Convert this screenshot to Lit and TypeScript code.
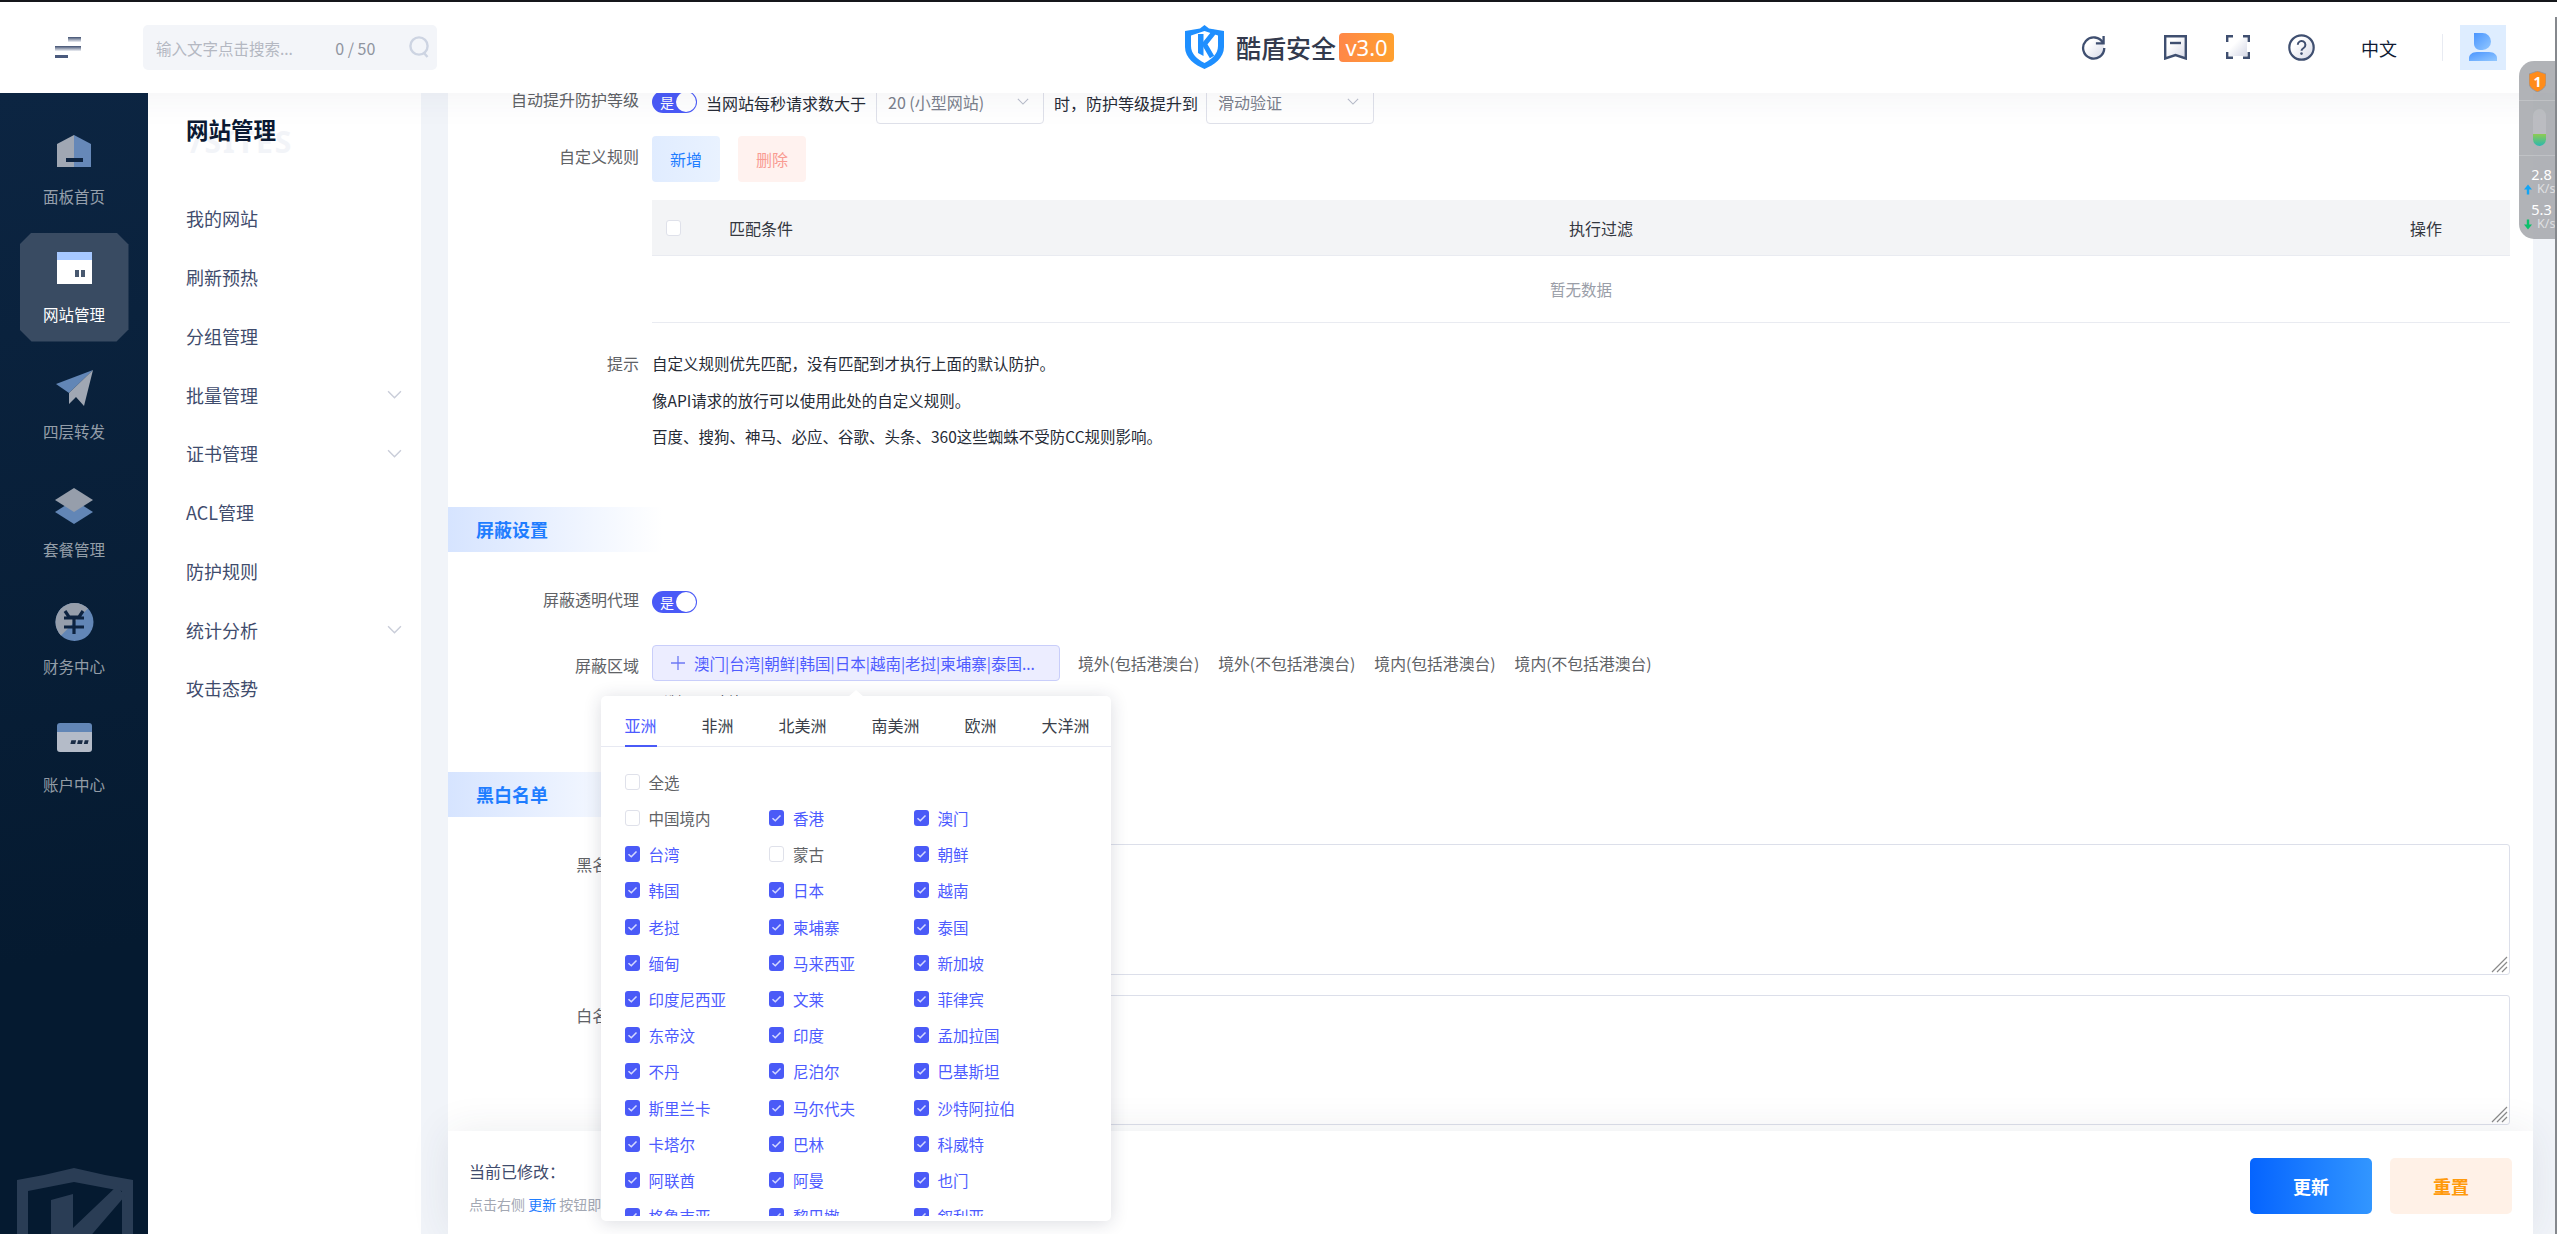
import { LitElement, html, css, svg } from "lit";
import { customElement } from "lit/decorators.js";

const SIDE = [
  { name: "面板首页", icon: svg`<path d="M18 1 1 10v23h17z" fill="#a0a7b3"/><path d="M18 1l17 9v23H18z" fill="#6688b8"/><rect x="10" y="24" width="17" height="4" fill="#0d2340"/>` },
  { name: "网站管理", active: true, icon: svg`<rect x="1" y="0" width="35" height="32" fill="#fff"/><rect x="1" y="0" width="35" height="8" fill="#a6c8ff"/><rect x="19" y="18" width="4" height="7" fill="#48586f"/><rect x="25" y="18" width="4" height="7" fill="#48586f"/>` },
  { name: "四层转发", icon: svg`<path d="M37 1 0 15l13 9z" fill="#6286b6"/><path d="M37 1 13 24v11l7-7 8 9z" fill="#a0a7b3"/>` },
  { name: "套餐管理", icon: svg`<path d="M18 13l19 12-19 12L-1 25z" fill="#6286b6"/><path d="M18 1l19 12-19 12L-1 13z" fill="#969eab"/>` },
  { name: "财务中心", icon: svg`<circle cx="18.5" cy="18" r="19" fill="#6286b6"/><path d="M32 4.600A19 19 0 0 0 5 31.400z" fill="#969eab"/><path d="M9 7l4 6h10l4-6M8 14h20M8 23h20M18 14v16" fill="none" stroke="#0d2340" stroke-width="3.200"/>` },
  { name: "账户中心", icon: svg`<path d="M1 12V4a3 3 0 0 1 3-3h29a3 3 0 0 1 3 3v8z" fill="#6286b6"/><path d="M1 10h35v17a3 3 0 0 1-3 3H4a3 3 0 0 1-3-3z" fill="#b4bbc8"/><path d="M15 23h5l1-4h-5zM22 23h5l1-4h-5zM29 23h4l1-4h-4z" fill="#1a2c46" transform="scale(.96)"/>` },
];

const MENU = [
  ["我的网站"], ["刷新预热"], ["分组管理"], ["批量管理", true], ["证书管理", true],
  ["ACL管理"], ["防护规则"], ["统计分析", true], ["攻击态势"],
] as [string, boolean?][];

const REGIONS: [string, boolean][] = [
  ["中国境内", false], ["香港", true], ["澳门", true],
  ["台湾", true], ["蒙古", false], ["朝鲜", true],
  ["韩国", true], ["日本", true], ["越南", true],
  ["老挝", true], ["柬埔寨", true], ["泰国", true],
  ["缅甸", true], ["马来西亚", true], ["新加坡", true],
  ["印度尼西亚", true], ["文莱", true], ["菲律宾", true],
  ["东帝汶", true], ["印度", true], ["孟加拉国", true],
  ["不丹", true], ["尼泊尔", true], ["巴基斯坦", true],
  ["斯里兰卡", true], ["马尔代夫", true], ["沙特阿拉伯", true],
  ["卡塔尔", true], ["巴林", true], ["科威特", true],
  ["阿联酋", true], ["阿曼", true], ["也门", true],
  ["格鲁吉亚", true], ["黎巴嫩", true], ["叙利亚", true],
];

const TABS = ["亚洲", "非洲", "北美洲", "南美洲", "欧洲", "大洋洲"];

const chevron = (cls: string) => html`<svg class=${cls} viewBox="0 0 14 8"><path d="M1 1l6 6 6-6" fill="none" stroke="currentColor" stroke-width="1.300"/></svg>`;

const toggle = () => html`<span class="switch"><span class="switch-text">是</span><span class="knob"></span></span>`;

const check = (on: boolean) => html`<span class="cb ${on ? "on" : ""}">${on ? html`<svg viewBox="0 0 15 16"><path d="M3.500 8.200l2.800 2.600 5.200-5.400" fill="none" stroke="#d5d9ff" stroke-width="1.500"/></svg>` : ""}</span>`;

@customElement("app-root")
export class AppRoot extends LitElement {
  static styles = css`
    :host { display: block; position: relative; width: 2557px; height: 1234px; overflow: hidden; background: #f1f4f9; font-family: "Noto Sans CJK SC", "Noto Sans", "Liberation Sans", sans-serif; font-size: 15.5px; color: #606266; }
    * { box-sizing: border-box; }
    svg { display: block; flex: none; }

    .page { display: flex; flex-direction: column; height: 100%; }
    .header { position: relative; z-index: 3; flex: none; height: 93px; background: #fff; border-top: 2px solid #15171b; display: flex; align-items: flex-start; box-shadow: 0 0 40px rgba(40, 50, 80, .07); }
    .left { width: 1185px; display: flex; flex: none; padding-left: 55px; }
    .burger { width: 26px; height: 21px; margin-top: 35px; }
    .search { width: 294px; height: 45px; margin: 23px 0 0 62px; border-radius: 5px; background: #f3f5f9; display: flex; align-items: center; padding: 0 7px 0 13px; color: #b4b8c2; }
    .search .ph { width: 180px; white-space: nowrap; line-height: 22px; font-size: 15.5px; }
    .search .count { width: 74px; font-size: 16px; color: #8f949f; }
    .logo { display: flex; align-items: flex-start; margin-top: 23px; }
    .logo-name { margin-left: 12px; font-size: 25px; line-height: 44px; font-weight: 500; color: #333a4d; white-space: nowrap; }
    .badge { margin: 8px 0 0 3px; width: 55px; height: 29px; border-radius: 4px; background: linear-gradient(90deg, #ff8748, #ffa02e); color: #fff; font-size: 22px; line-height: 29px; text-align: center; font-family: "Noto Sans", sans-serif; }
    .tools { margin-left: auto; padding-right: 51px; display: flex; align-items: flex-start; }
    .t-refresh { width: 25px; height: 25px; margin-top: 33px; }
    .t-book { width: 23px; height: 25px; margin: 33px 0 0 58px; }
    .t-full { width: 24px; height: 24px; margin: 33px 0 0 39px; }
    .t-help { width: 27px; height: 27px; margin: 32px 0 0 38px; }
    .lang { margin: 33px 0 0 46px; width: 36px; font-size: 18px; line-height: 26px; color: #0f1b33; white-space: nowrap; }
    .vline { width: 1px; height: 27px; background: #e8ebf2; margin: 32px 0 0 45px; }
    .avatar { width: 46px; height: 45px; margin: 23px 0 0 17px; background: #deedff; }

    .body { flex: 1; display: flex; min-height: 0; }
    .side { position: relative; z-index: 4; flex: none; width: 148px; padding-top: 22px; background: linear-gradient(170deg, #0c2542, #051a30 75%); overflow: hidden; display: flex; flex-direction: column; align-items: center; gap: 8.600px; }
    .side-item { width: 109px; height: 109px; flex: none; padding-top: 19px; display: flex; flex-direction: column; align-items: center; color: rgba(255, 255, 255, .58); }
    .side-item.active { background: #394b62; color: #fff; clip-path: polygon(11% 0, 89% 0, 100% 11%, 100% 89%, 89% 100%, 11% 100%, 0 89%, 0 11%); }
    .side-item svg { width: 36px; height: 36px; overflow: visible; }
    .side-item span { margin-top: 16px; line-height: 20px; font-size: 15.5px; white-space: nowrap; }
    .mark { position: absolute; left: 17px; top: 1075px; width: 116px; height: 130px; }

    .sub { flex: none; width: 273px; background: #fff; padding: 0 0 0 38px; position: relative; }
    .sub-title { position: relative; height: 44px; margin-top: 14px; font-size: 22.5px; line-height: 44px; font-weight: 700; color: #0c1a33; white-space: nowrap; }
    .sub-bg { position: absolute; left: 4px; top: 18px; font-size: 30px; line-height: 34px; font-weight: 700; color: #f2f4f8; letter-spacing: 2px; font-family: "Noto Sans", sans-serif; }
    .sub-title b { position: relative; font-weight: 700; }
    .sub-list { margin-top: 38px; }
    .sub-item { height: 58.75px; display: flex; align-items: center; justify-content: space-between; padding-right: 19px; font-size: 18px; color: #3f4c6d; }
    .chev { width: 15px; height: 9px; color: #c9cdd9; }

    .main { flex: 1; margin-left: 27px; margin-right: 24px; min-width: 0; display: flex; flex-direction: column; background: #fff; }
    .scroll { flex: 1; min-height: 0; overflow: hidden; }
    .content { margin-top: -14px; }
    .row { display: flex; align-items: flex-start; gap: 13px; padding-right: 23px; }
    .label { flex: none; width: 191px; text-align: right; font-size: 16px; line-height: 22px; padding-top: 9px; white-space: nowrap; color: #606266; }
    .label.flush { padding-top: 0; }
    .label.hint { padding-top: 7px; }
    .r1 { height: 45px; }
    .r1-body { display: flex; align-items: center; height: 45px; font-size: 16px; color: #262b36; white-space: nowrap; padding-top: 3px; }
    .r1-body .switch { margin: -3px 9px 0 0; }
    .select { width: 168px; height: 45px; margin-top: -3px; border: 1px solid #dfe1ea; border-radius: 4px; display: flex; align-items: center; justify-content: space-between; padding: 0 14px 0 11px; color: #7b808c; }
    .select .chev { width: 12px; height: 7px; color: #b9bdcb; }
    .s1 { margin-left: 10px; }
    .s2 { margin-left: 8px; }
    .gap-text { margin-left: 10px; }
    .r2 { margin-top: 12px; }
    .btns { display: flex; gap: 18px; }
    .btn { width: 68px; height: 46px; border-radius: 4px; display: flex; align-items: center; justify-content: center; font-size: 16px; }
    .btn.add { background: linear-gradient(90deg, #e0ecff, #e9f2ff); color: #1f7dff; }
    .btn.del { background: #fff2ef; color: #f99b92; }

    .table { margin: 18px 23px 0 204px; }
    .thead { height: 56px; background: #f3f4f6; border-bottom: 1px solid #e9ebf1; display: grid; grid-template-columns: 77px 840px 841px 1fr; align-items: center; font-size: 16px; color: #33373f; }
    .thead .cb { margin-left: 14px; }
    .empty { height: 67px; border-bottom: 1px solid #e9ebf1; display: flex; align-items: center; justify-content: center; color: #9a9ea8; font-size: 15.5px; }
    .r-hint { margin-top: 22px; }
    .lines { color: #262b36; line-height: 36.5px; white-space: nowrap; }
    .section { width: 215px; height: 45px; padding-left: 28px; background: linear-gradient(90deg, #d6e4ff, #fff); color: #1f7dff; font-size: 18px; line-height: 45px; font-weight: 700; }
    .sec1 { margin-top: 52.5px; }
    .sec2 { margin-top: 60px; }
    .r-switch { margin-top: 36px; height: 28px; }
    .r-switch .switch { margin-top: 3px; }
    .switch { position: relative; flex: none; display: inline-block; width: 45px; height: 22px; border-radius: 11px; background: #4a5af7; }
    .switch-text { position: absolute; left: 8px; top: 0; line-height: 22px; font-size: 14px; color: #fff; }
    .knob { position: absolute; right: 1px; top: 1px; width: 20px; height: 20px; border-radius: 50%; background: #fff; }
    .r-area { margin-top: 29px; height: 36px; }
    .tag { width: 408px; height: 36px; flex: none; border: 1px solid #c9cefa; border-radius: 4px; background: #ecedff; color: #4f5cff; display: flex; align-items: center; padding-left: 18px; gap: 9px; white-space: nowrap; overflow: hidden; }
    .tag svg { width: 14px; height: 14px; }
    .links { display: flex; gap: 19px; margin-left: 5px; height: 36px; align-items: center; white-space: nowrap; font-size: 15.8px; color: #606266; }
    .helper { margin: 9px 0 0 204px; line-height: 22px; height: 22px; color: #262b36; font-size: 12.5px; }
    .r-area-t { margin-top: 27px; height: 131px; }
    .r-area-b { margin-top: 20px; height: 130px; }
    .ta { flex: 1; height: 100%; border: 1px solid #dcdfea; border-radius: 3px; position: relative; background: #fff; }
    .grip { position: absolute; right: 1px; bottom: 1px; width: 17px; height: 17px; }

    .action { position: relative; z-index: 2; flex: none; height: 103px; background: #fff; display: flex; align-items: flex-start; justify-content: space-between; padding: 27px 21px 0 21px; box-shadow: 0 0 40px rgba(40, 50, 80, .09); }
    .action-t { font-size: 16px; line-height: 26px; color: #3f4c6d; white-space: nowrap; }
    .action-s { font-size: 14px; line-height: 20px; margin-top: 10px; color: #a3a8b3; white-space: nowrap; }
    .action-s em { font-style: normal; color: #1f7dff; }
    .action-btns { display: flex; gap: 18px; }
    .big { width: 122px; height: 56px; border-radius: 5px; display: flex; align-items: center; justify-content: center; font-size: 18px; font-weight: 700; }
    .big.go { background: linear-gradient(90deg, #0564ff, #3296ff); color: #fff; }
    .big.reset { background: #fff1e7; color: #ff9a0c; }

    .pop { position: absolute; z-index: 5; left: 601px; top: 696px; width: 510px; height: 525px; background: #fff; border-radius: 5px; box-shadow: 0 2px 18px rgba(30, 40, 70, .16); }
    .arrow { position: absolute; left: 247px; top: -6px; width: 0; height: 0; border-left: 8px solid transparent; border-right: 8px solid transparent; border-bottom: 7px solid #fff; }
    .tabs { height: 51px; border-bottom: 1px solid #e7e9f2; display: flex; gap: 45px; padding: 0 23.5px; font-size: 16px; }
    .tab { position: relative; height: 50px; line-height: 58px; color: #3a3f4a; white-space: nowrap; }
    .tab.on { color: #4d5bff; }
    .tab.on::after { content: ""; position: absolute; left: 0; right: 0; bottom: -1px; height: 2px; background: #4a5af7; }
    .pop-body { height: 469px; overflow: hidden; padding: 16px 0 0 23.5px; }
    .opt { display: flex; align-items: center; height: 36.2px; gap: 9px; white-space: nowrap; color: #606266; }
    .opt.on { color: #4d5bff; }
    .all { height: 37px; }
    .grid { display: grid; grid-template-columns: 144.5px 144.5px 144.5px; }
    .cb { flex: none; display: block; width: 15px; height: 16px; border: 1px solid #dfe1ea; border-radius: 3px; background: #fff; }
    .cb.on { border: none; background: #4a5af7; }
    .cb svg { width: 15px; height: 16px; }

    .widget { position: absolute; z-index: 6; right: 0; top: 61px; width: 38px; height: 178px; border-radius: 15px 0 0 15px; background: rgba(166, 168, 173, .88); color: #fff; display: flex; flex-direction: column; align-items: center; }
    .w-top { height: 40px; width: 100%; display: flex; justify-content: center; padding-top: 10px; border-bottom: 1px solid rgba(255, 255, 255, .2); }
    .w-top svg { width: 17px; height: 21px; margin-left: -2px; }
    .w-mid { height: 55px; width: 100%; border-bottom: 1px solid rgba(255, 255, 255, .2); padding: 8px 0 0 14px; }
    .tube { width: 13px; height: 37px; border-radius: 7px; background: rgba(255, 255, 255, .14); overflow: hidden; display: flex; align-items: flex-end; }
    .tube i { display: block; width: 100%; height: 12px; background: linear-gradient(#8ecb52, #2bb8b0); }
    .w-stat { width: 100%; padding: 11px 0 0 5px; }
    .w-num { font-size: 14.5px; line-height: 15px; text-align: center; padding-left: 2px; font-family: "Noto Sans", sans-serif; }
    .w-unit { display: flex; align-items: center; gap: 5px; height: 14px; line-height: 14px; font-size: 12.5px; color: rgba(255, 255, 255, .6); white-space: nowrap; font-family: "Noto Sans", sans-serif; }
    .w-unit svg { width: 8px; height: 11px; }
    .w-stat.second { padding-top: 6px; }
    .edge { position: absolute; z-index: 7; right: 0; top: 17px; bottom: 0; width: 2px; background: #85888d; }
  `;

  render() {
    return html`
      <div class="page">
        <header class="header">
          <div class="left">
            <svg class="burger" viewBox="0 0 26 21"><defs><linearGradient id="bg" x1="0" y1="0" x2="0" y2="1"><stop offset="0" stop-color="#3f4f70"/><stop offset="1" stop-color="#eef0f5"/></linearGradient></defs><rect x="13" y="0" width="13" height="5" fill="url(#bg)"/><rect x="0" y="9" width="26" height="5" fill="url(#bg)"/><rect x="0" y="18" width="13" height="3" fill="#4a5a7d"/></svg>
            <div class="search">
              <span class="ph">输入文字点击搜索...</span>
              <span class="count">0 / 50</span>
              <svg width="21" height="25" viewBox="0 0 21 25"><circle cx="10" cy="11" r="8.600" fill="none" stroke="#cdd4e2" stroke-width="2.400"/><path d="M15 18l3.500 4" stroke="#cdd4e2" stroke-width="2.400"/></svg>
            </div>
          </div>
          <div class="logo">
            <svg width="39" height="44" viewBox="0 0 39 44"><path fill-rule="evenodd" d="M19.500 0 24 3.500 39 6V22C39 33 29 40 19.500 44 10 40 0 33 0 22V6L15 3.500zM19.500 6 6 10.500V21C6 29 12 34 19.500 38 27 34 33 29 33 21V10.500z" fill="#1e8fff"/><path d="M13 9h5.500v22L13 28z" fill="#1e8fff"/><path d="M18 21 30 6M20 20l7 12" fill="none" stroke="#1e8fff" stroke-width="5"/></svg>
            <span class="logo-name">酷盾安全</span>
            <span class="badge">v3.0</span>
          </div>
          <div class="tools">
            <svg class="t-refresh" viewBox="0 0 26 26"><defs><linearGradient id="tg" x1="0" y1="0" x2="1" y2="1"><stop offset=".3" stop-color="#fff"/><stop offset="1" stop-color="#d5d8e6"/></linearGradient></defs><circle cx="13" cy="13.500" r="11" fill="url(#tg)"/><path d="M23 8.500A11 11 0 1 0 24.200 13.500" fill="none" stroke="#3f4f70" stroke-width="2.400"/><path d="M15.500 8.800h8V1" fill="none" stroke="#3f4f70" stroke-width="2.400"/></svg>
            <svg class="t-book" viewBox="0 0 23 25"><path d="M1.200 1.200H21.800V23.500L11.500 20 1.200 23.500z" fill="url(#tg)" stroke="#3f4f70" stroke-width="2.400"/><path d="M6 8h11" stroke="#3f4f70" stroke-width="2.400"/></svg>
            <svg class="t-full" viewBox="0 0 24 24"><rect x="3" y="3" width="18" height="18" fill="url(#tg)"/><path d="M1.200 7V1.200H7M17 1.200h5.800V7M22.800 17v5.800H17M7 22.800H1.200V17" fill="none" stroke="#3f4f70" stroke-width="2.400"/></svg>
            <svg class="t-help" viewBox="0 0 27 27"><circle cx="13.500" cy="13.500" r="12.200" fill="url(#tg)" stroke="#3f4f70" stroke-width="2.200"/><path d="M9.800 10.800a3.800 3.800 0 1 1 5.800 3.200c-1.300.8-2.100 1.300-2.100 2.800" fill="none" stroke="#3f4f70" stroke-width="2"/><circle cx="13.500" cy="19.600" r="1.300" fill="#3f4f70"/></svg>
            <span class="lang">中文</span>
            <span class="vline"></span>
            <svg class="avatar" viewBox="0 0 46 45"><defs><linearGradient id="ag" x1="0" y1="0" x2="1" y2="1"><stop offset="0" stop-color="#4a95ff"/><stop offset="1" stop-color="#93c8ff"/></linearGradient></defs><path d="M14 8h8.500a8.500 8.500 0 0 1 0 17H20a6 6 0 0 1-6-6z" fill="url(#ag)"/><path d="M9 36v-3c0-3 3-6 8-6h12c5 0 8 3 8 6v3z" fill="url(#ag)"/></svg>
          </div>
        </header>
        <div class="body">
          <nav class="side">
            ${SIDE.map((s) => html`<div class="side-item ${s.active ? "active" : ""}"><svg viewBox="0 0 36 36">${s.icon}</svg><span>${s.name}</span></div>`)}
            <svg class="mark" viewBox="0 0 116 130"><path fill-rule="evenodd" d="M57 0 88 7l28 5v53c0 32-30 52-58 65C30 117 0 97 0 65V12l27-5zM57 14 11 23v42c0 24 24 40 47 51 23-11 47-27 47-51V23z" fill="#2a3d55"/><path d="M34 32l22-6v34L100 18l8 10-50 58-24-8z" fill="#2a3d55"/></svg>
          </nav>
          <aside class="sub">
            <div class="sub-title"><span class="sub-bg">/SITES</span><b>网站管理</b></div>
            <div class="sub-list">
              ${MENU.map(([n, c]) => html`<div class="sub-item"><span>${n}</span>${c ? chevron("chev") : ""}</div>`)}
            </div>
          </aside>
          <main class="main">
            <div class="scroll">
              <div class="content">
                <div class="row r1">
                  <div class="label">自动提升防护等级</div>
                  <div class="r1-body">
                    ${toggle()}
                    <span>当网站每秒请求数大于</span>
                    <span class="select s1"><span>20 (小型网站)</span>${chevron("chev")}</span>
                    <span class="gap-text">时，防护等级提升到</span>
                    <span class="select s2"><span>滑动验证</span>${chevron("chev")}</span>
                  </div>
                </div>
                <div class="row r2">
                  <div class="label">自定义规则</div>
                  <div class="btns"><div class="btn add">新增</div><div class="btn del">删除</div></div>
                </div>
                <div class="table">
                  <div class="thead"><span>${check(false)}</span><span>匹配条件</span><span>执行过滤</span><span>操作</span></div>
                  <div class="empty">暂无数据</div>
                </div>
                <div class="row r-hint">
                  <div class="label hint">提示</div>
                  <div class="lines">
                    <div>自定义规则优先匹配，没有匹配到才执行上面的默认防护。</div>
                    <div>像API请求的放行可以使用此处的自定义规则。</div>
                    <div>百度、搜狗、神马、必应、谷歌、头条、360这些蜘蛛不受防CC规则影响。</div>
                  </div>
                </div>
                <div class="section sec1">屏蔽设置</div>
                <div class="row r-switch">
                  <div class="label flush">屏蔽透明代理</div>
                  ${toggle()}
                </div>
                <div class="row r-area">
                  <div class="label">屏蔽区域</div>
                  <div class="tag">
                    <svg viewBox="0 0 14 14"><path d="M7 0v14M0 7h14" stroke="#6c78f5" stroke-width="1.300"/></svg>
                    <span>澳门|台湾|朝鲜|韩国|日本|越南|老挝|柬埔寨|泰国...</span>
                  </div>
                  <div class="links"><span>境外(包括港澳台)</span><span>境外(不包括港澳台)</span><span>境内(包括港澳台)</span><span>境内(不包括港澳台)</span></div>
                </div>
                <div class="helper">已选择 203 个地区</div>
                <div class="section sec2">黑白名单</div>
                <div class="row r-area-t">
                  <div class="label">黑名单IP</div>
                  <div class="ta"><svg class="grip" viewBox="0 0 17 17"><path d="M1 16 16 1M6 16 16 6M11 16l5-5" stroke="#8a8a8a" stroke-width="1.200"/></svg></div>
                </div>
                <div class="row r-area-b">
                  <div class="label">白名单IP</div>
                  <div class="ta"><svg class="grip" viewBox="0 0 17 17"><path d="M1 16 16 1M6 16 16 6M11 16l5-5" stroke="#8a8a8a" stroke-width="1.200"/></svg></div>
                </div>
              </div>
            </div>
            <div class="action">
              <div>
                <div class="action-t">当前已修改：</div>
                <div class="action-s">点击右侧 <em>更新</em> 按钮即可生效</div>
              </div>
              <div class="action-btns"><div class="big go">更新</div><div class="big reset">重置</div></div>
            </div>
          </main>
        </div>
      </div>

      <div class="pop">
        <span class="arrow"></span>
        <div class="tabs">${TABS.map((t, i) => html`<span class="tab ${i === 0 ? "on" : ""}">${t}</span>`)}</div>
        <div class="pop-body">
          <div class="opt all">${check(false)}<span>全选</span></div>
          <div class="grid">
            ${REGIONS.map(([n, on]) => html`<div class="opt ${on ? "on" : ""}">${check(on)}<span>${n}</span></div>`)}
          </div>
        </div>
      </div>

      <div class="widget">
        <div class="w-top"><svg viewBox="0 0 17 21"><path d="M8.500 0 17 3v9c0 4-4 7-8.500 9C4 19 0 16 0 12V3z" fill="#ff8c1a" stroke="#8e96a5" stroke-width=".8"/><text x="8.500" y="15.500" text-anchor="middle" font-size="14" font-weight="700" font-family="Noto Sans, sans-serif" fill="#fff">1</text></svg></div>
        <div class="w-mid"><div class="tube"><i></i></div></div>
        <div class="w-stat">
          <div class="w-num">2.8</div>
          <div class="w-unit"><svg viewBox="0 0 8 10"><path d="M4 0l4 5H5.200v5H2.800V5H0z" fill="#12a5f5"/></svg>K/s</div>
        </div>
        <div class="w-stat second">
          <div class="w-num">5.3</div>
          <div class="w-unit"><svg viewBox="0 0 8 10"><path d="M4 10 0 5h2.800V0h2.400v5H8z" fill="#0cc06b"/></svg>K/s</div>
        </div>
      </div>
      <div class="edge"></div>
    `;
  }
}
